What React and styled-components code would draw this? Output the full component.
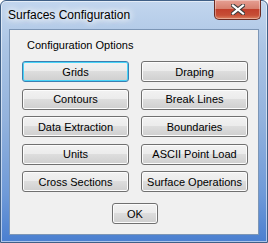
import React from 'react';
import styled, { createGlobalStyle } from 'styled-components';

const GlobalStyle = createGlobalStyle`
  html, body { margin:0; padding:0; background:#fff; }
  body { width:268px; height:243px; overflow:hidden; }
`;

const leftButtons = ['Grids', 'Contours', 'Data Extraction', 'Units', 'Cross Sections'];
const rightButtons = ['Draping', 'Break Lines', 'Boundaries', 'ASCII Point Load', 'Surface Operations'];

const App = () => {
  const rows = leftButtons.map((l, i) => [l, rightButtons[i]]);

  return (
    <>
      <GlobalStyle />
      <Window>
        <TitleBar>
          <Title>Surfaces Configuration</Title>
          <CloseButton>
            <svg width="14" height="11" viewBox="0 0 14 11">
              <path d="M2 1.5 L12 9.5 M12 1.5 L2 9.5" stroke="#3b3b3b" strokeWidth="4.2" strokeLinecap="square" />
              <path d="M2 1.5 L12 9.5 M12 1.5 L2 9.5" stroke="#fff" strokeWidth="2.2" strokeLinecap="square" />
            </svg>
          </CloseButton>
        </TitleBar>
        <Client>
          <Label>Configuration Options</Label>
          <ButtonGrid>
            {rows.map(([l, r], idx) => (
              <React.Fragment key={idx}>
                <Button $focused={idx === 0}>{l}</Button>
                <Button>{r}</Button>
              </React.Fragment>
            ))}
          </ButtonGrid>
          <Footer>
            <OkButton>OK</OkButton>
          </Footer>
        </Client>
      </Window>
    </>
  );
};

export default App;

const Window = styled.div`
  box-sizing:border-box;
  width:268px;
  height:243px;
  padding:0 8px 7px 8px;
  display:flex;
  flex-direction:column;
  border:1px solid #3f5f86;
  border-radius:6px 6px 0 0;
  background:linear-gradient(180deg, #c2d6ee 0%, #aac4e4 20%, #92b2dd 50%, #6f9ad8 80%, #4a7fd0 100%);
  box-shadow:inset 0 0 0 1px rgba(255,255,255,0.55);
`;

const TitleBar = styled.div`
  height:28px;
  display:flex;
  align-items:flex-start;
  justify-content:space-between;
  margin-right:-2px;
`;

const Title = styled.div`
  margin-top:7px;
  margin-left:-1px;
  font-family:"Liberation Sans", Arial, sans-serif;
  font-size:12px;
  color:#000;
  text-shadow:0 0 6px #fff, 0 0 8px #fff, 0 0 10px #fff;
`;

const CloseButton = styled.div`
  box-sizing:border-box;
  width:47px;
  height:20px;
  margin-top:-1px;
  display:flex;
  align-items:center;
  justify-content:center;
  border:1px solid #6b2b22;
  border-top:none;
  border-radius:0 0 5px 5px;
  background:linear-gradient(180deg, #e6a094 0%, #d7806e 45%, #c2402c 50%, #c64e36 80%, #dc8260 100%);
  box-shadow:inset 0 0 0 1px rgba(255,255,255,0.35);
`;

const Client = styled.div`
  flex:1;
  box-sizing:border-box;
  display:flex;
  flex-direction:column;
  background:#f0f0f0;
  border:1px solid #7c96b6;
  padding:9px 0 0 12px;
`;

const Label = styled.div`
  margin-left:5px;
  font-family:"Liberation Sans", Arial, sans-serif;
  font-size:11px;
  line-height:13px;
  color:#000;
`;

const ButtonGrid = styled.div`
  margin-top:9px;
  display:grid;
  grid-template-columns:107px 107px;
  grid-auto-rows:21px;
  column-gap:12px;
  row-gap:6.5px;
`;

const Button = styled.div`
  box-sizing:border-box;
  display:flex;
  align-items:center;
  justify-content:center;
  font-family:"Liberation Sans", Arial, sans-serif;
  font-size:11px;
  color:#000;
  border:1px solid ${props => (props.$focused ? '#3c7fb1' : '#707070')};
  border-radius:3px;
  background:linear-gradient(180deg, #f2f2f2 0%, #ebebeb 50%, #dddddd 50%, #cfcfcf 100%);
  box-shadow:${props => (props.$focused
    ? 'inset 0 0 0 1px #48d4f8'
    : 'inset 0 0 0 1px #fcfcfc')};
`;

const Footer = styled.div`
  display:flex;
  justify-content:center;
  margin-top:11px;
  padding-right:10px;
`;

const OkButton = styled(Button)`
  width:46px;
  height:21px;
`;
